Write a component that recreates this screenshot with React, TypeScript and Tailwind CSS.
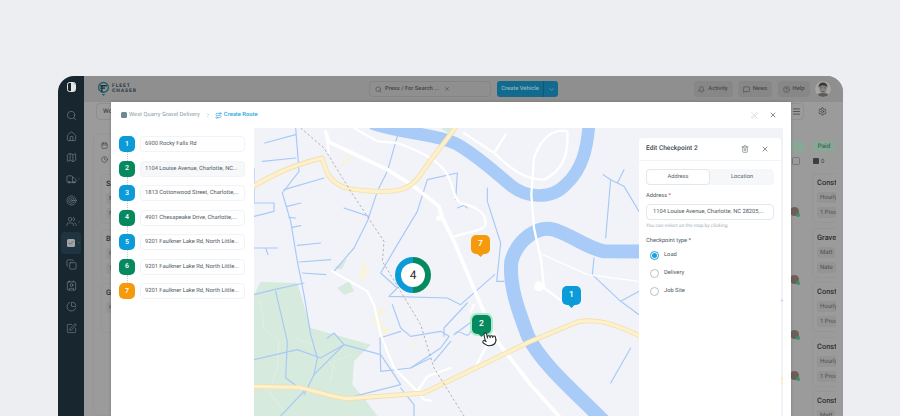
import React from 'react';
import {
  Bell, Calendar, Check, ChevronDown, ChevronRight, Clock, Contact, Copy, Home, Map as MapIcon,
  MessageSquare, CircleHelp, Menu, PenOff, PieChart, Pointer, Route, Search, Settings, SquarePen,
  Target, Trash2, Truck, Users, X,
} from 'lucide-react';

const stops = [
  { n: 1, address: '6900 Rocky Falls Rd', color: 'bg-[#0a9bd8]' },
  { n: 2, address: '1104 Louise Avenue, Charlotte, NC...', color: 'bg-[#06895f]', active: true },
  { n: 3, address: '1813 Cottonwood Street, Charlotte,...', color: 'bg-[#0a9bd8]' },
  { n: 4, address: '4901 Chesapeake Drive, Charlotte,...', color: 'bg-[#06895f]' },
  { n: 5, address: '9201 Faulkner Lake Rd, North Little...', color: 'bg-[#0a9bd8]' },
  { n: 6, address: '9201 Faulkner Lake Rd, North Little...', color: 'bg-[#06895f]' },
  { n: 7, address: '9201 Faulkner Lake Rd, North Little...', color: 'bg-[#f59a0a]' },
];

const streams = [
  'M125,0 L135,130 L85,195 L110,280 L130,400 L150,500 L170,620 L190,690 L180,740 L150,800',
  'M430,25 L400,130 L370,190 L340,280 L300,360 L240,430',
  'M610,135 L520,155 L490,250 L430,350 L380,435 L430,480 L405,505 L580,510 L620,530 L722,440',
  'M610,135 L605,215',
  'M700,180 L700,220 L740,345 L728,460 L750,460',
  'M32,45 L125,20 M25,100 L125,90 M90,185 L210,150 M100,235 L140,225 M0,225 L60,225 L60,250 L0,265 M0,225 L0,120',
  'M105,268 L125,270 M115,298 L140,293 M130,352 L200,345 M0,360 L70,360 M35,360 L42,380 M135,402 L230,395 M145,435 L215,440 M270,240 L345,265',
  'M415,530 L440,600 L470,625 L560,610 L585,625 L560,660 L470,720 L380,730 L378,630 L440,610',
  'M570,625 L570,600 L640,525',
  'M0,695 L130,665 L200,690 L270,650 L380,680 L440,770 L300,805',
  'M220,630 L240,615 L270,650 L180,740',
  'M0,500 L60,485 L150,465 M65,490 L100,640 L95,750 L150,790 L80,864',
  'M1048,140 L1070,155 L1110,175 L1155,250 M1110,125 L1090,165 M1070,155 L1055,330 M1020,390 L1015,440 L1100,520 L1155,560 M1100,520 L1155,490 M1130,660 L1070,765',
  'M600,620 L640,590 L670,570 M440,780 L480,830 L480,864 M540,700 L590,640 M470,720 L530,690',
  'M605,615 C620,600 640,640 650,610 M610,240 L630,232 L640,240',
  'M1578,515 L1590,520',
];

const yellowRoads = 'M-10,180 C40,150 100,115 205,90 C215,130 225,160 270,178 C320,190 400,195 440,185 C480,175 500,140 520,110 C550,70 590,20 610,-10 M-10,775 L130,778 C180,785 230,808 280,812 L510,795 L830,640 L970,582 C1030,570 1090,590 1165,628 M1576,752 L1596,768';

const MapDrawing = () => (
  <svg viewBox="0 0 1587 864" className="block w-full h-full" fill="none" strokeLinecap="round" strokeLinejoin="round">
    <rect width="1587" height="864" fill="#f1f3f8" />
    <path d="M0,500 L20,462 L130,465 L170,600 L350,650 L300,700 L295,770 L330,810 L370,864 L0,864 Z M240,420 L280,392 L262,425 Z M250,480 L285,460 L300,490 L270,500 Z M560,0 L600,0 L582,15 Z" fill="#d6eadd" />
    <path d="M20,520 L30,600 L75,640 L70,720 L45,790 L90,850 M230,760 L240,700 L290,680 M120,630 L180,650 L250,730" stroke="#e8f2eb" strokeWidth="2" />
    <path d="M265,70 L285,68 L290,100 L250,122 L285,85 Z M312,452 L330,393 L345,430 L325,460 Z M352,572 L370,540 L396,545 L372,572 L412,614 L396,622 L360,592 Z M470,660 L490,628 L482,655 Z" fill="#f8f3df" />
    <path d="M360,-12 C450,18 560,18 620,55 C680,92 720,130 770,172 C815,208 890,218 935,170 C985,125 1000,60 1005,-12" stroke="#a9cbf8" strokeWidth="38" />
    <path d="M1400,372 L1050,370 C1000,360 960,325 900,305 C850,292 790,335 772,400 C765,470 790,540 822,625 C860,705 960,790 1050,880" stroke="#a9cbf8" strokeWidth="42" />
    {streams.map((d, i) => (
      <path key={i} d={d} stroke="#a8c9f7" strokeWidth="3.5" />
    ))}
    <path d="M215,12 L225,42 L400,125 L480,175 L555,235 L565,270 L600,340 L680,530 L730,640 L830,770 L920,870" stroke="#fff" strokeWidth="11" />
    <path d="M215,12 L225,75 M300,0 L370,40 L430,45 C500,70 560,100 580,140 C600,180 600,215 620,225 C660,235 695,250 695,285 C695,310 640,310 595,328 M630,15 L720,75 C760,110 800,155 870,155 C920,130 945,90 940,10 C900,0 860,30 840,90 L832,200 L840,300 L862,400 L870,480 L925,520 M720,75 L755,20 M235,430 L340,490 L360,530 L380,620 L420,720 L490,790 L520,745 L590,720 M700,650 L665,715 M490,790 L510,815 L530,818 M650,550 L660,530" stroke="#fff" strokeWidth="7" />
    <path d="M862,378 L1000,440 L1155,460" stroke="#fff" strokeWidth="4" />
    <circle cx="855" cy="475" r="15" fill="#fff" />
    <circle cx="555" cy="270" r="8" fill="#fff" />
    <path d={yellowRoads} stroke="#f3dfae" strokeWidth="15" />
    <path d={yellowRoads} stroke="#fdf1cb" strokeWidth="10" />
    <path d="M140,0 L210,60 L290,190 L390,340 L385,400 L440,490 L500,590 L540,720 L630,864" stroke="#8d9096" strokeWidth="2" strokeDasharray="7 7" strokeLinecap="butt" />
  </svg>
);

const Pin = ({ n, color, className }: { n: number; color: string; className: string }) => (
  <div className={`absolute w-[19px] h-[19px] rounded-[5px] flex items-center justify-center text-white text-[8.5px] font-medium ${color} ${className}`}>
    {n}
    <span className={`absolute -bottom-[2px] left-[7px] w-[5px] h-[5px] rotate-45 ${color}`} />
  </div>
);

const Avatar = ({ className }: { className: string }) => (
  <svg viewBox="0 0 16 16" className={className}>
    <defs>
      <clipPath id="face-clip">
        <circle cx="8" cy="8" r="8" />
      </clipPath>
    </defs>
    <g clipPath="url(#face-clip)">
      <rect width="16" height="16" fill="#a5a5a5" />
      <ellipse cx="8" cy="7.5" rx="3.8" ry="4.8" fill="#8a8380" />
      <path d="M3.5 6.5C3.5 2.5 6 1.5 8 1.5S12.5 2.5 12.5 6.5L11.5 5.5C10 4 6 4 4.5 5.5Z" fill="#3a3a3a" />
      <path d="M5 6.8H7.2M8.8 6.8H11M6.5 10.5H9.5" stroke="#444" strokeWidth=".6" />
      <path d="M1.5 16C2 12.5 5 12 8 12s6 .5 6.5 4Z" fill="#5c5c5c" />
    </g>
  </svg>
);

const MiniAvatar = ({ className }: { className: string }) => (
  <div className={`relative w-[9px] h-[9px] rounded-full bg-[#6d5f56] ${className}`}>
    <span className="absolute -right-[1px] -bottom-[1px] w-[4px] h-[4px] rounded-full bg-[#3b8f6d]" />
  </div>
);

const BoardCard = ({ title, chips }: { title: string; chips: string[] }) => (
  <div className="h-[50px] w-[60px] shrink-0 rounded-[4px] border border-[#969696] pl-[4px] pt-[4px]">
    <div className="whitespace-nowrap text-[7.5px] font-medium leading-[10px] text-[#303030]">{title}</div>
    <div className="mt-[4px] flex flex-col gap-[4px]">
      {chips.map((chip) => (
        <div key={chip} className="w-fit whitespace-nowrap rounded-[3px] bg-[#949494] px-[3px] text-[6px] leading-[11px] text-[#505050]">
          {chip}
        </div>
      ))}
    </div>
  </div>
);

const sideIcons = [Search, Home, MapIcon, Truck, Target, Users, Check, Copy, Contact, PieChart, SquarePen];

export default function App() {
  return (
    <div className="h-[416px] w-[900px] overflow-hidden bg-[#eceef2] pt-[76px] pl-[58px] font-[Roboto,sans-serif] [text-rendering:geometricPrecision]">
      <div className="relative flex h-[340px] w-[785px] overflow-hidden rounded-t-[16px]">
        {/* sidebar */}
        <aside className="flex w-[26px] shrink-0 flex-col items-center bg-[#17262f] pt-[6px] text-[#8b9599]">
          <div className="flex h-[10px] w-[9px] overflow-hidden rounded-[2.5px] border border-[#e6e6e6]">
            <div className="w-1/2" />
            <div className="w-1/2 bg-[#e6e6e6]" />
          </div>
          <div className="mt-[12.5px] flex flex-col items-center">
            {sideIcons.map((Icon, i) => (
              <div
                key={i}
                className={`relative flex h-[21.3px] w-[20px] items-center justify-center rounded-[3px] ${i === 6 ? 'bg-[#1e3440]' : ''}`}
              >
                {i === 6 ? (
                  <div className="flex h-[8px] w-[8px] items-center justify-center rounded-[1.5px] bg-[#a3a3a3]">
                    <Check size={6} strokeWidth={2} className="text-[#22343e]" />
                  </div>
                ) : (
                  <Icon size={11} strokeWidth={1.2} />
                )}
                {(i === 3 || i === 5 || i === 6) && <ChevronRight size={4} className="absolute right-[0px]" />}
              </div>
            ))}
          </div>
        </aside>

        {/* page behind the dialog */}
        <main className="flex min-w-0 flex-1 flex-col bg-[#9b9b9b]">
          <header className="flex h-[26px] shrink-0 items-center bg-[#8f8f8f] pl-[13px] pr-[12px]">
            <div className="flex w-[272px] items-center">
              <svg viewBox="0 0 16 18" className="h-[16px] w-[13px]" fill="none">
                <circle cx="8" cy="7" r="6" stroke="#15606f" strokeWidth="1.6" />
                <path d="M4 5H12M4 8H10M6 5V13" stroke="#1d2f38" strokeWidth="1.6" />
                <path d="M6 15L8 17.5L10 15Z" fill="#15606f" />
              </svg>
              <div className="ml-[2px] text-[5px] font-black leading-[5px] tracking-[0.9px] text-[#33414a]">
                <div>FLEET</div>
                <div>CHASER</div>
              </div>
            </div>
            <div className="flex h-[16px] w-[122px] items-center rounded-[4px] border border-[#858585] pl-[5px] text-[5.8px] font-medium text-[#454545]">
              <Search size={7} className="mr-[3px] text-[#4a4a4a]" />
              Press / For Search ...
              <X size={6} className="ml-[5px]" />
            </div>
            <div className="ml-[6px] flex h-[16px] w-[61px] items-center rounded-[3px] bg-[#126a8c] text-[5.8px] font-medium text-[#8fb6c6]">
              <span className="flex-1 text-center">Create Vehicle</span>
              <span className="flex h-full w-[15px] items-center justify-center border-l border-[#0d5875]">
                <ChevronDown size={7} />
              </span>
            </div>
            <div className="ml-auto flex items-center gap-[5.5px] text-[5.8px] font-medium text-[#4a4a4a]">
              <div className="flex h-[16px] w-[39px] items-center justify-center gap-[3px] rounded-[4px] bg-[#878787]">
                <Bell size={7} />
                Activity
              </div>
              <div className="flex h-[16px] w-[34px] items-center justify-center gap-[3px] rounded-[4px] bg-[#878787]">
                <MessageSquare size={7} />
                News
              </div>
              <div className="flex h-[16px] w-[32px] items-center justify-center gap-[3px] rounded-[4px] bg-[#878787]">
                <CircleHelp size={7} />
                Help
              </div>
              <Avatar className="h-[16px] w-[16px] rounded-full" />
            </div>
          </header>

          <div className="flex shrink-0 items-center justify-between pl-[12px] pr-[16px] pt-[1px]">
            <div className="flex h-[17px] w-[60px] items-center rounded-[4px] border border-[#8e8e8e] pl-[6px] text-[6.5px] text-[#333]">
              Work
            </div>
            <div className="flex items-center gap-[14px] text-[#3f3f3f]">
              <div className="flex h-[17px] w-[16px] items-center justify-center rounded-[4px] border border-[#909090]">
                <Menu size={9} />
              </div>
              <Settings size={9} />
            </div>
          </div>

          <div className="flex min-h-0 flex-1 justify-between overflow-hidden pl-[9px] pr-[7px] pt-[13px]">
            <div className="flex w-[80px] flex-col rounded-[6px] border border-[#969696] pl-[7px] pt-[8px]">
              <Calendar size={7} className="text-[#444]" />
              <Clock size={7} className="mt-[7px] text-[#444]" />
              <div className="mt-[11px] flex flex-col gap-[4.5px]">
                <BoardCard title="Sand" chips={['Ma', 'No']} />
                <BoardCard title="Brick" chips={['Ho', '1']} />
                <BoardCard title="Gravel" chips={['Ho']} />
              </div>
            </div>

            <div className="flex w-[46px] gap-[3px]">
              <div className="relative flex w-[15px] flex-col items-end overflow-hidden">
                <div className="mt-[8px] h-[11px] w-[15px] rounded-r-[2px] bg-[#8aa697]" />
                <div className="mr-[5px] mt-[5px] h-[8px] w-[8px] rounded-[1.5px] border border-[#777]" />
                <MiniAvatar className="mr-[6px] mt-[42px]" />
                <MiniAvatar className="mr-[6px] mt-[59px]" />
                <MiniAvatar className="mr-[6px] mt-[46px]" />
                <MiniAvatar className="mr-[6px] mt-[32px]" />
              </div>
              <div className="flex w-[28px] flex-col overflow-hidden rounded-[5px]">
                <div className="ml-[5px] mt-[8px] flex h-[11px] w-[22px] shrink-0 items-center justify-center rounded-[2px] bg-[#8aa697] text-[6.3px] font-medium text-[#2f6f52]">
                  Paid
                </div>
                <div className="ml-[5px] mt-[5px] flex h-[8px] shrink-0 items-center gap-[2px] text-[6px] text-[#444]">
                  <span className="h-[6px] w-[6px] rounded-[1px] bg-[#3a3f45]" />0
                </div>
                <div className="ml-[4px] mt-[8px] flex flex-col gap-[4.5px]">
                  <BoardCard title="Construction" chips={['Hourly', '1 Product']} />
                  <BoardCard title="Gravel" chips={['Matt', 'Nate']} />
                  <BoardCard title="Construction" chips={['Hourly', '1 Product']} />
                  <BoardCard title="Construction" chips={['Hourly', '1 Product']} />
                  <BoardCard title="Construction" chips={['Matt']} />
                </div>
              </div>
            </div>
          </div>
        </main>

        {/* route dialog */}
        <section className="absolute left-[53px] top-[26px] flex h-[314px] w-[680px] flex-col bg-white shadow-[0_0_3px_rgba(0,0,0,0.2)]">
          <div className="flex h-[26px] shrink-0 items-center pl-[10px] pr-[14px] text-[5.8px]">
            <span className="flex h-[6px] w-[6px] items-center justify-center rounded-[1.5px] bg-[#6f8694]" />
            <span className="ml-[2px] text-[#8c9ba6]">West Quarry Gravel Delivery</span>
            <ChevronRight size={6} className="ml-[5px] text-[#a9b3ba]" />
            <Route size={7} className="ml-[4px] text-[#2ba6e0]" />
            <span className="ml-[2px] font-medium text-[#2ba6e0]">Create Route</span>
            <PenOff size={7} className="ml-auto text-[#c9ced2]" />
            <X size={8} className="ml-[11px] text-[#4c5a63]" />
          </div>

          <div className="flex min-h-0 flex-1">
            <ul className="flex w-[143px] shrink-0 flex-col gap-[8.5px] pl-[8px] pr-[9px] pt-[8px]">
              {stops.map((s, i) => (
                <li key={s.n} className="relative flex items-center gap-[5px]">
                  <div className={`flex h-[16px] w-[16px] shrink-0 items-center justify-center rounded-[5px] text-[7px] font-medium text-white ${s.color}`}>
                    {s.n}
                  </div>
                  <div className={`h-[16px] flex-1 truncate rounded-[4px] border border-[#f1f3f6] pl-[4px] text-[5.75px] leading-[14px] text-[#4f5962] ${s.active ? 'bg-[#f7f8fa]' : ''}`}>
                    {s.address}
                  </div>
                  {i < stops.length - 1 && (
                    <span className="absolute left-[7.5px] top-[16px] h-[8.5px] border-l border-dotted border-[#c4cacf]" />
                  )}
                </li>
              ))}
            </ul>

            <div className="relative min-w-0 flex-1 overflow-hidden">
              <div className="mr-[8px] h-full">
                <MapDrawing />
              </div>

              <div className="absolute left-[141px] top-[129px] flex h-[36px] w-[36px] items-center justify-center rounded-full bg-[conic-gradient(#06895f_0deg_180deg,#0a9bd8_180deg_360deg)]">
                <div className="flex h-[24px] w-[24px] items-center justify-center rounded-full bg-white text-[12px] text-[#2b2b2b]">
                  4
                </div>
              </div>
              <Pin n={7} color="bg-[#f59a0a]" className="left-[217px] top-[107px]" />
              <Pin n={1} color="bg-[#0a9bd8]" className="left-[308px] top-[158px]" />
              <Pin n={2} color="bg-[#06895f]" className="left-[218px] top-[187px] shadow-[0_0_0_2px_#a9eccb]" />
              <Pointer size={16} strokeWidth={1.5} fill="#fff" className="absolute left-[227px] top-[203px] -rotate-12 text-[#222]" />

              {/* checkpoint panel */}
              <aside className="absolute bottom-0 left-[385px] top-[10px] w-[142px] rounded-t-[4px] bg-white">
                <div className="flex h-[23px] items-center border-b border-[#f2f3f5] pl-[7px] pr-[12px]">
                  <span className="flex-1 text-[6.6px] font-medium text-[#3f4a52]">Edit Checkpoint 2</span>
                  <Trash2 size={8} className="text-[#6f7a82]" />
                  <X size={8} className="ml-[12px] text-[#4c5a63]" />
                </div>
                <div className="px-[7px] pt-[8px]">
                  <div className="flex h-[16px] rounded-[4px] bg-[#f6f7f9] text-[5.75px] text-[#5a646c]">
                    <div className="flex w-[64px] items-center justify-center rounded-[4px] border border-[#e3e7ea] bg-white">Address</div>
                    <div className="flex flex-1 items-center justify-center">Location</div>
                  </div>
                  <div className="mt-[6px] text-[5.75px] leading-[10px] text-[#4f5962]">
                    Address <span className="text-[#e23b3b]">*</span>
                  </div>
                  <div className="mt-[3px] flex h-[16px] items-center truncate rounded-[4px] border border-[#e3e7ea] pl-[6px] text-[5.75px] text-[#4f5962]">
                    1104 Louise Avenue, Charlotte, NC 28205,...
                  </div>
                  <div className="mt-[2px] text-[4.9px] leading-[8px] text-[#a3b0ba]">You can select on the map by clicking</div>
                  <div className="mt-[6px] text-[5.75px] leading-[10px] text-[#4f5962]">
                    Checkpoint type <span className="text-[#5a646c]">*</span>
                  </div>
                  <div className="mt-[5px] flex flex-col gap-[9px] pl-[4px] text-[5.75px] text-[#4f5962]">
                    <label className="flex h-[9px] items-center gap-[5px]">
                      <span className="flex h-[9px] w-[9px] items-center justify-center rounded-full border border-[#1aa0dd]">
                        <span className="h-[5px] w-[5px] rounded-full bg-[#1aa0dd]" />
                      </span>
                      Load
                    </label>
                    <label className="flex h-[9px] items-center gap-[5px]">
                      <span className="h-[9px] w-[9px] rounded-full border border-[#b6c0c7]" />
                      Delivery
                    </label>
                    <label className="flex h-[9px] items-center gap-[5px]">
                      <span className="h-[9px] w-[9px] rounded-full border border-[#b6c0c7]" />
                      Job Site
                    </label>
                  </div>
                </div>
              </aside>
            </div>
          </div>
        </section>
      </div>
    </div>
  );
}
